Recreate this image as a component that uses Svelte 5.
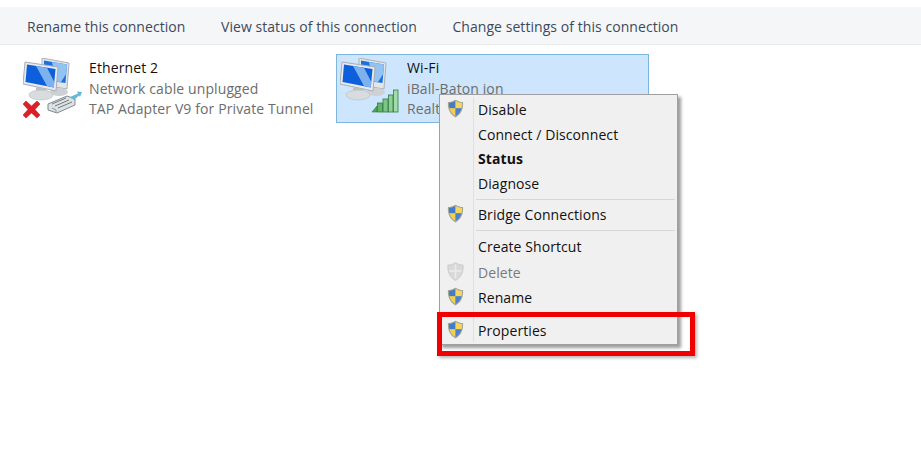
<script>
  const menu = [
    { items: [{ label: 'Disable', shield: true }, { label: 'Connect / Disconnect' }, { label: 'Status', bold: true }, { label: 'Diagnose' }] },
    { items: [{ label: 'Bridge Connections', shield: true }] },
    { tall: true, items: [{ label: 'Create Shortcut' }, { label: 'Delete', shield: true, disabled: true }, { label: 'Rename', shield: true }] },
    { tall: true, items: [{ label: 'Properties', shield: true }] }
  ];
</script>

{#snippet monitors()}
  <path d="M19 0 L46 5 L44 31 L19 27 Z" fill="#e3e6e9" stroke="#aab1b7" stroke-width="1"/>
  <path d="M21 2.500 L44 6.500 L42.500 25 L21 22 Z" fill="#1c6fe2"/>
  <path d="M29 4 L44 6.500 L43.200 16 L38 24 L33 23.500 Z" fill="#93c3f3"/>
  <ellipse cx="36" cy="34" rx="9" ry="4" fill="#cdd1d3"/>
  <path d="M2 4 L35 9 L33 33 L0 26 Z" fill="#e8ebed" stroke="#a7aeb4" stroke-width="1"/>
  <path d="M4 6.500 L32.500 11 L30.800 29.500 L2.500 24 Z" fill="#0d5fdc"/>
  <path d="M13 8 L24 9.700 L31.300 24 L30.800 29.500 L24 28 Z" fill="#7db2ef"/>
  <path d="M13 29 L23 31 L24 36 L13 34 Z" fill="#bcc1c4"/>
  <ellipse cx="18" cy="37" rx="12" ry="5" fill="#d9dcde" stroke="#b6babc" stroke-width=".6"/>
{/snippet}

{#snippet shield(disabled)}
  <svg class="shield" viewBox="0 0 18 20" width="17" height="19" aria-hidden="true">
    {#if disabled}
      <path d="M9 .8 C12 2.500 14.500 3.200 17 3.200 C17.500 10 15.500 16 9 19.500 C2.500 16 .5 10 1 3.200 C3.500 3.200 6 2.500 9 .8 Z" fill="#d9d9d9" stroke="#cacaca"/>
      <path d="M9 2.500 V17.500 M2.500 9.500 H15.500" stroke="#ebebeb" stroke-width="1.500"/>
    {:else}
      <path d="M9 .8 C12 2.500 14.500 3.200 17 3.200 C17.500 10 15.500 16 9 19.500 C2.500 16 .5 10 1 3.200 C3.500 3.200 6 2.500 9 .8 Z" fill="#a3a598"/>
      <path d="M9 2 C6.500 3.400 4.500 4 2.200 4.200 C2.100 6 2.200 8 2.700 9.700 H9 Z" fill="#3f7ccb"/>
      <path d="M9 2 C11.500 3.400 13.500 4 15.800 4.200 C15.900 6 15.800 8 15.300 9.700 H9 Z" fill="#f6d75c"/>
      <path d="M2.700 9.700 H9 V18 C5.500 16 3.500 13 2.700 9.700 Z" fill="#f3cf4a"/>
      <path d="M15.300 9.700 H9 V18 C12.500 16 14.500 13 15.300 9.700 Z" fill="#4a82cf"/>
    {/if}
  </svg>
{/snippet}

<div class="page">
  <nav class="toolbar">
    <span>Rename this connection</span>
    <span>View status of this connection</span>
    <span>Change settings of this connection</span>
  </nav>

  <div class="connections">
    <div class="conn ethernet">
      <svg class="icon" viewBox="0 0 62 62" width="62" height="62" aria-hidden="true">
        {@render monitors()}
        <path d="M3 43 L8.500 48 L14 43 L17 46 L12 51.500 L17 57 L14 60 L8.500 55 L3 60 L0 57 L5 51.500 L0 46 Z" fill="#dc2028" stroke="#a81a20" stroke-width=".5"/>
        <path d="M25 46 L44 38 L52 41 L52 47 L34 55 L25 52 Z" fill="#dde2e5" stroke="#7f8a91" stroke-width="1"/>
        <path d="M29 46 L43 40 M32 48 L46 42 M35 50 L49 44" stroke="#6f7b82" stroke-width="1"/>
        <path d="M29 50 L33 52 V54" stroke="#8f999f" fill="none"/>
        <path d="M47 39 L55 35.500 L54 33.500 L59 34 L57 39 L56 37.500 L51 42 Z" fill="#66b8d8"/>
      </svg>
      <div class="text">
        <div class="name">Ethernet 2</div>
        <div class="sub">Network cable unplugged</div>
        <div class="sub">TAP Adapter V9 for Private Tunnel</div>
      </div>
    </div>

    <div class="conn wifi">
      <svg class="icon" viewBox="0 0 62 62" width="62" height="62" aria-hidden="true">
        {@render monitors()}
        <path d="M32 54 L37 48 V54 Z" fill="#4fa35a" stroke="#2f7d3c" stroke-width=".6"/>
        <rect x="37.500" y="45" width="5" height="9" fill="#62b56c" stroke="#2f7d3c" stroke-width=".8"/>
        <rect x="43" y="41" width="5" height="13" fill="#7cc586" stroke="#2f7d3c" stroke-width=".8"/>
        <rect x="48.500" y="37" width="4.500" height="17" fill="#8fd098" stroke="#2f7d3c" stroke-width=".8"/>
        <rect x="53.500" y="32" width="4.500" height="22" fill="#a4dbab" stroke="#2f7d3c" stroke-width=".8"/>
      </svg>
      <div class="text">
        <div class="name">Wi-Fi</div>
        <div class="sub">iBall-Baton ion</div>
        <div class="sub">Realt</div>
      </div>
    </div>
  </div>

  <div class="menu">
    {#each menu as group, g}
      {#if g > 0}<div class="sep"></div>{/if}
      {#each group.items as item}
        <div class="item" class:tall={group.tall} class:bold={item.bold} class:disabled={item.disabled}>
          <span class="gutter">{#if item.shield}{@render shield(item.disabled)}{/if}</span>
          <span>{item.label}</span>
        </div>
      {/each}
    {/each}
  </div>
  <div class="highlight"></div>
</div>

<style>
  :global(body) {
    margin: 0;
    background: #fff;
  }
  .page {
    position: relative;
    width: 921px;
    height: 454px;
    overflow: hidden;
    padding-top: 7px;
    box-sizing: border-box;
    font-family: "Open Sans", "Liberation Sans", sans-serif;
    font-size: 14px;
    letter-spacing: 0.08px;
  }
  .toolbar {
    height: 38px;
    box-sizing: border-box;
    padding: 2px 27px 0;
    display: flex;
    align-items: center;
    gap: 35.500px;
    background: #f5f6f7;
    border-bottom: 1px solid #eaecee;
    color: #3c4a5c;
    letter-spacing: 0.06px;
  }
  .connections {
    display: flex;
    gap: 22px;
    padding: 9px 0 0 19px;
  }
  .conn {
    height: 69px;
    box-sizing: border-box;
    display: flex;
    gap: 4px;
    padding: 3px 0 0 3px;
    border: 1px solid transparent;
  }
  .ethernet {
    width: 295px;
  }
  .wifi {
    width: 313px;
    background: #cde6fd;
    border-color: #7db5de;
  }
  .wifi .text {
    padding-left: 1px;
  }
  .icon {
    flex: none;
  }
  .text {
    line-height: 20.500px;
    white-space: nowrap;
    letter-spacing: 0.11px;
  }
  .name {
    color: #111;
  }
  .sub {
    color: #6d6d6d;
  }
  .menu {
    position: absolute;
    left: 439px;
    top: 94px;
    width: 239px;
    box-sizing: border-box;
    padding: 2.500px 2px 1px 3px;
    background: #f0f0f0;
    border: 1px solid #a0a0a0;
    box-shadow: 3px 3px 3px rgba(90, 90, 90, 0.6);
    color: #111;
  }
  .menu::before {
    content: "";
    position: absolute;
    left: 33px;
    top: 2px;
    bottom: 2px;
    border-left: 1px solid #e0e0e0;
  }
  .item {
    height: 24.500px;
    display: flex;
    align-items: center;
  }
  .tall {
    height: 25.500px;
  }
  .gutter {
    width: 35px;
    flex: none;
    display: flex;
    justify-content: center;
    padding-right: 11px;
    box-sizing: border-box;
    margin-top: -2px;
  }
  .shield {
    display: block;
  }
  .bold {
    font-weight: 700;
  }
  .disabled {
    color: #7a7a7a;
  }
  .sep {
    height: 1px;
    margin: 3px 0 3px 33px;
    background: #d7d7d7;
  }
  .highlight {
    position: absolute;
    left: 437px;
    top: 312px;
    width: 258px;
    height: 44px;
    box-sizing: border-box;
    border: 5px solid #f00000;
    box-shadow: 2px 2px 3px rgba(110, 110, 110, 0.5);
  }
</style>
